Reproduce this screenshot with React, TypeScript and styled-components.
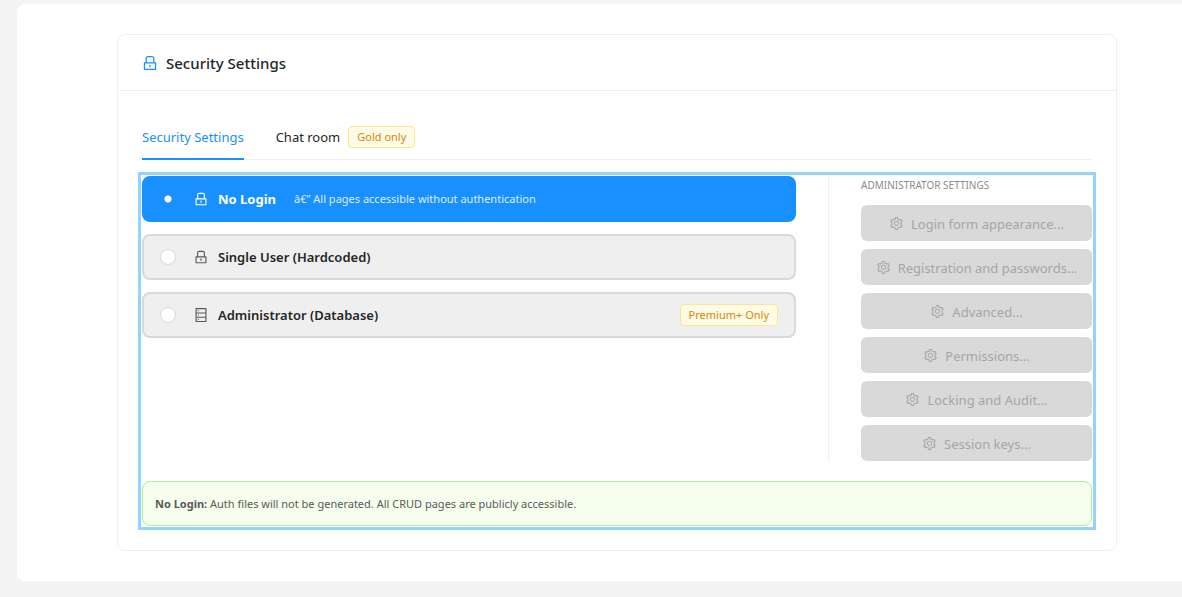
import React, { useState } from 'react';
import styled, { createGlobalStyle, css } from 'styled-components';
import { AiOutlineDatabase, AiOutlineLock, AiOutlineSetting } from 'react-icons/ai';

const GlobalStyle = createGlobalStyle`
  *, *::before, *::after { box-sizing: border-box; }
  body {
    margin: 0;
    background: #f4f4f4;
    color: #262626;
    font-family: 'Segoe UI', 'Noto Sans', 'Open Sans', sans-serif;
    font-size: 13px;
    line-height: 22px;
  }
  button, input { font: inherit; }
`;

const Page = styled.main`
  margin: 4px 0 16px 17px;
  padding: 30px 65px 30px 100px;
  background: #fff;
  border-radius: 8px 0 0 8px;
`;

const Card = styled.section`
  border: 1px solid #f0f0f0;
  border-radius: 8px;
`;

const CardHeader = styled.header`
  display: flex;
  align-items: center;
  gap: 7px;
  height: 56px;
  padding: 0 23px;
  border-bottom: 1px solid #f0f0f0;

  svg { color: #1890ff; font-size: 18px; }
`;

const CardTitle = styled.h1`
  margin: 0;
  font-size: 15px;
  line-height: 24px;
  font-weight: 500;
`;

const CardBody = styled.div`
  padding: 24px;
`;

const TabBar = styled.div`
  display: flex;
  gap: 32px;
  margin-bottom: 16px;
  box-shadow: inset 0 -1px 0 #f0f0f0;
`;

const Tab = styled.button<{ $active?: boolean }>`
  display: flex;
  align-items: center;
  gap: 8px;
  padding: 11px 0 10px;
  border: 0;
  border-bottom: 2px solid ${(p) => (p.$active ? '#1890ff' : 'transparent')};
  background: none;
  color: ${(p) => (p.$active ? '#1890ff' : '#262626')};
  cursor: pointer;
`;

const Tag = styled.span`
  padding: 0 8px;
  border: 1px solid #ffe58f;
  border-radius: 4px;
  background: #fffbe6;
  color: #d48806;
  font-size: 11px;
  line-height: 20px;
  white-space: nowrap;
`;

const Panel = styled.div`
  outline: 3px solid #91d5ff;
  outline-offset: 1px;
`;

const Columns = styled.div`
  display: flex;
  gap: 32px;
  margin-bottom: 20px;
`;

const Options = styled.div`
  flex: 1;
  display: flex;
  flex-direction: column;
  gap: 12px;
`;

const Option = styled.label<{ $selected: boolean }>`
  display: flex;
  align-items: center;
  height: 46px;
  padding: 0 16px;
  border: 2px solid #d9d9d9;
  border-radius: 8px;
  background: #efefef;
  cursor: pointer;

  svg {
    margin: 0 9px 0 17px;
    color: #595959;
    font-size: 16px;
  }

  ${(p) =>
    p.$selected &&
    css`
      border-color: #1890ff;
      background: #1890ff;
      color: #fff;
      svg { color: #fff; }
    `}
`;

const Radio = styled.input`
  appearance: none;
  width: 16px;
  height: 16px;
  margin: 0;
  border: 1px solid #d9d9d9;
  border-radius: 50%;
  background: #fff;

  &:checked {
    border-color: #1890ff;
    background: radial-gradient(circle, #fff 3px, #1890ff 4px);
  }
`;

const OptionName = styled.span<{ $selected: boolean }>`
  font-weight: ${(p) => (p.$selected ? 700 : 600)};
`;

const OptionHint = styled.span`
  margin-left: 18px;
  font-size: 11px;
  opacity: 0.85;
`;

const OptionTag = styled(Tag)`
  margin-left: auto;
`;

const Side = styled.aside`
  width: 264px;
  padding-left: 32px;
  border-left: 1px solid #f0f0f0;
  display: flex;
  flex-direction: column;
  gap: 8px;
`;

const SideTitle = styled.h2`
  margin: 0 0 3px;
  color: #8c8c8c;
  font-size: 10px;
  line-height: 18px;
  font-weight: 400;
  text-transform: uppercase;
`;

const SideButton = styled.button`
  display: flex;
  align-items: center;
  justify-content: center;
  gap: 7px;
  height: 36px;
  padding: 1px 8px 0;
  border: 0;
  border-radius: 6px;
  background: #d9d9d9;
  color: #a6a6a6;
  white-space: nowrap;

  svg { font-size: 15px; flex: none; }
`;

const Notice = styled.p`
  margin: 0;
  padding: 12px;
  border: 1px solid #b7eb8f;
  border-radius: 8px;
  background: #f6ffed;
  color: #595959;
  font-size: 11px;
  line-height: 19px;
`;

const options = [
  { id: 'none', name: 'No Login', icon: <AiOutlineLock />, hint: 'â€” All pages accessible without authentication' },
  { id: 'single', name: 'Single User (Hardcoded)', icon: <AiOutlineLock /> },
  { id: 'database', name: 'Administrator (Database)', icon: <AiOutlineDatabase />, tag: 'Premium+ Only' },
];

const adminActions = [
  'Login form appearance...',
  'Registration and passwords...',
  'Advanced...',
  'Permissions...',
  'Locking and Audit...',
  'Session keys...',
];

export default function App() {
  const [mode, setMode] = useState('none');

  return (
    <>
      <GlobalStyle />
      <Page>
        <Card>
          <CardHeader>
            <AiOutlineLock />
            <CardTitle>Security Settings</CardTitle>
          </CardHeader>
          <CardBody>
            <TabBar role="tablist">
              <Tab role="tab" aria-selected $active>Security Settings</Tab>
              <Tab role="tab" aria-selected={false}>
                Chat room <Tag>Gold only</Tag>
              </Tab>
            </TabBar>
            <Panel role="tabpanel">
              <Columns>
                <Options role="radiogroup" aria-label="Login mode">
                  {options.map((o) => (
                    <Option key={o.id} $selected={mode === o.id}>
                      <Radio
                        type="radio"
                        name="login-mode"
                        checked={mode === o.id}
                        onChange={() => setMode(o.id)}
                      />
                      {o.icon}
                      <OptionName $selected={mode === o.id}>{o.name}</OptionName>
                      {o.hint && <OptionHint>{o.hint}</OptionHint>}
                      {o.tag && <OptionTag>{o.tag}</OptionTag>}
                    </Option>
                  ))}
                </Options>
                <Side>
                  <SideTitle>Administrator settings</SideTitle>
                  {adminActions.map((label) => (
                    <SideButton key={label} disabled>
                      <AiOutlineSetting />
                      {label}
                    </SideButton>
                  ))}
                </Side>
              </Columns>
              <Notice>
                <strong>No Login:</strong> Auth files will not be generated. All CRUD pages are publicly accessible.
              </Notice>
            </Panel>
          </CardBody>
        </Card>
      </Page>
    </>
  );
}
